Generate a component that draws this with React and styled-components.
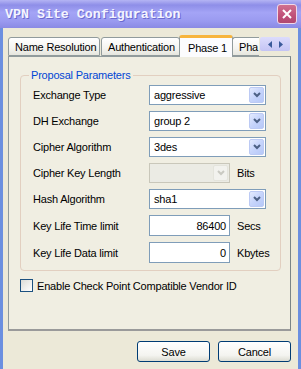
import React from "react";
import styled, { createGlobalStyle } from "styled-components";

const GlobalStyle = createGlobalStyle`
  html, body {
    margin: 0;
    padding: 0;
    background: #ece9d8;
  }
  body {
    font-family: "Liberation Sans", Arial, sans-serif;
    font-size: 11px;
    letter-spacing: -0.2px;
    color: #000;
  }
`;

const Window = styled.div`
  width: 301px;
  height: 369px;
  display: flex;
  flex-direction: column;
  overflow: hidden;
`;

const TitleBar = styled.div`
  height: 28px;
  flex: none;
  display: flex;
  align-items: center;
  justify-content: space-between;
  padding: 0 4px 0 5px;
  box-sizing: border-box;
  background: linear-gradient(
    180deg,
    #b4b4f4 0%,
    #8e8ee8 18%,
    #a4a4f6 45%,
    #9a9af0 75%,
    #8a8ae4 100%
  );
`;

const Title = styled.span`
  font-family: "Liberation Mono", "Courier New", monospace;
  font-weight: bold;
  font-size: 13.3px;
  letter-spacing: 0;
  color: #f4f4ff;
  text-shadow: 1px 1px 0 #6a6ad0;
`;

const CloseButton = styled.div`
  width: 20px;
  height: 20px;
  box-sizing: border-box;
  border: 1px solid #f0d8e8;
  border-radius: 3px;
  background: linear-gradient(180deg, #d07090 0%, #c05078 60%, #b04870 100%);
  display: flex;
  align-items: center;
  justify-content: center;
`;

const Body = styled.div`
  flex: 1;
  display: flex;
  flex-direction: column;
  background: #ece9d8;
  border-left: 3px solid #6b8fe0;
  border-right: 3px solid #6b8fe0;
  padding: 7px 7px 0 5px;
`;

const TabStrip = styled.div`
  height: 22px;
  display: flex;
  align-items: flex-end;
  position: relative;
  z-index: 1;
  margin-bottom: -1px;
`;

const Tab = styled.div`
  flex: none;
  box-sizing: border-box;
  width: ${(p) => p.$w}px;
  height: ${(p) => (p.$active ? 22 : 19)}px;
  margin: ${(p) => (p.$active ? "0 -1px 0 -2px" : "0 1px 1px 0")};
  padding-left: ${(p) => (p.$active ? 8 : 6)}px;
  display: flex;
  align-items: center;
  white-space: nowrap;
  border: 1px solid #919b9c;
  border-bottom: ${(p) => (p.$active ? "none" : "1px solid #919b9c")};
  border-right: ${(p) => (p.$cut ? "none" : "1px solid #919b9c")};
  border-radius: ${(p) => (p.$cut ? "3px 0 0 0" : "3px 3px 0 0")};
  border-top: ${(p) => (p.$active ? "3px solid #f7b43c" : "1px solid #919b9c")};
  background: ${(p) =>
    p.$active
      ? "#fcfcfe"
      : "linear-gradient(180deg, #ffffff 0%, #f4f4f0 60%, #e6e6de 100%)"};
  position: relative;
  z-index: ${(p) => (p.$active ? 2 : 1)};
`;

const ScrollArrows = styled.div`
  align-self: flex-start;
  margin-top: 2px;
  width: 30px;
  height: 14px;
  display: flex;
  align-items: center;
  justify-content: center;
  gap: 5px;
  background: linear-gradient(180deg, #dcdcfc 0%, #c4c4f4 100%);
  border-radius: 2px;
`;

const TabPanel = styled.div`
  height: 275px;
  box-sizing: border-box;
  border: 1px solid #919b9c;
  border-right-color: #7a8487;
  border-bottom: 2px solid #9a9a9a;
  background: #f0eee2;
  padding: 11px 10px 0 11px;
`;

const GroupBox = styled.fieldset`
  margin: 0;
  width: 261px;
  height: 203px;
  box-sizing: border-box;
  border: 1px solid #e2cfc0;
  border-radius: 4px;
  padding: 0 0 0 12px;
`;

const Legend = styled.legend`
  color: #0046d5;
  padding: 0 2px;
  margin-left: -4px;
  line-height: 14px;
`;

const Row = styled.div`
  display: flex;
  align-items: center;
  height: ${(p) => p.$h || 26}px;
`;

const Label = styled.span`
  width: 116px;
  flex: none;
`;

const Select = styled.div`
  width: ${(p) => p.$w || 117}px;
  height: 20px;
  box-sizing: border-box;
  border: 1px solid ${(p) => (p.$disabled ? "#c9c7ba" : "#7f9db9")};
  background: ${(p) => (p.$disabled ? "#ebebe4" : "#fff")};
  display: flex;
  align-items: center;
  justify-content: space-between;
  padding: 0 1px 0 4px;
`;

const DropButton = styled.div`
  width: 15px;
  height: 16px;
  border-radius: 2px;
  display: flex;
  align-items: center;
  justify-content: center;
  background: ${(p) =>
    p.$disabled
      ? "#f2f2ee"
      : "linear-gradient(135deg, #e4ebfe 0%, #c6d4fb 50%, #b6c8f8 100%)"};
  border: 1px solid ${(p) => (p.$disabled ? "#e4e4dc" : "#bccaf4")};
  box-sizing: border-box;
`;

const TextInput = styled.div`
  width: 81px;
  height: 21px;
  box-sizing: border-box;
  border: 1px solid #7f9db9;
  background: #fff;
  display: flex;
  align-items: center;
  justify-content: flex-end;
  padding-right: 3px;
`;

const Unit = styled.span`
  margin-left: 7px;
`;

const CheckRow = styled.div`
  display: flex;
  align-items: center;
  margin-top: 8px;
`;

const CheckBox = styled.div`
  width: 13px;
  height: 13px;
  box-sizing: border-box;
  border: 1px solid #1c5180;
  background: linear-gradient(135deg, #dcdcd7 0%, #fff 100%);
  margin-right: 4px;
`;

const ButtonRow = styled.div`
  display: flex;
  justify-content: flex-end;
  gap: 8px;
  padding-top: 10px;
`;

const Button = styled.div`
  width: 73px;
  height: 21px;
  box-sizing: border-box;
  border: 1px solid #003c74;
  border-radius: 3px;
  background: linear-gradient(180deg, #ffffff 0%, #f4f4f0 70%, #dcdcd2 100%);
  display: flex;
  align-items: center;
  justify-content: center;
`;

const Chevron = ({ disabled }) => (
  <svg width="8" height="6" viewBox="0 0 8 6">
    <path
      d="M1 1 L4 4 L7 1"
      fill="none"
      stroke={disabled ? "#c9c9c2" : "#4d6185"}
      strokeWidth="2"
    />
  </svg>
);

const Combo = ({ value, w, disabled }) => (
  <Select $w={w} $disabled={disabled}>
    <span>{value}</span>
    <DropButton $disabled={disabled}>
      <Chevron disabled={disabled} />
    </DropButton>
  </Select>
);

export default function App() {
  return (
    <Window>
      <GlobalStyle />
      <TitleBar>
        <Title>VPN Site Configuration</Title>
        <CloseButton>
          <svg width="10" height="10" viewBox="0 0 10 10">
            <path d="M1 1 L9 9 M9 1 L1 9" stroke="#fff" strokeWidth="2" />
          </svg>
        </CloseButton>
      </TitleBar>
      <Body>
        <TabStrip>
          <Tab $w={92}>Name Resolution</Tab>
          <Tab $w={79}>Authentication</Tab>
          <Tab $w={54} $active>
            Phase 1
          </Tab>
          <Tab $w={27} $cut>
            Pha
          </Tab>
          <ScrollArrows>
            <svg width="5" height="7" viewBox="0 0 5 7">
              <path d="M4 0 L0 3.5 L4 7 Z" fill="#3a5a9a" />
            </svg>
            <svg width="5" height="7" viewBox="0 0 5 7">
              <path d="M1 0 L5 3.5 L1 7 Z" fill="#3a5a9a" />
            </svg>
          </ScrollArrows>
        </TabStrip>
        <TabPanel>
          <GroupBox>
            <Legend>Proposal Parameters</Legend>
            <Row>
              <Label>Exchange Type</Label>
              <Combo value="aggressive" />
            </Row>
            <Row>
              <Label>DH Exchange</Label>
              <Combo value="group 2" />
            </Row>
            <Row>
              <Label>Cipher Algorithm</Label>
              <Combo value="3des" />
            </Row>
            <Row>
              <Label>Cipher Key Length</Label>
              <Combo value="" w={81} disabled />
              <Unit>Bits</Unit>
            </Row>
            <Row>
              <Label>Hash Algorithm</Label>
              <Combo value="sha1" />
            </Row>
            <Row $h={27}>
              <Label>Key Life Time limit</Label>
              <TextInput>86400</TextInput>
              <Unit>Secs</Unit>
            </Row>
            <Row $h={27}>
              <Label>Key Life Data limit</Label>
              <TextInput>0</TextInput>
              <Unit>Kbytes</Unit>
            </Row>
          </GroupBox>
          <CheckRow>
            <CheckBox />
            Enable Check Point Compatible Vendor ID
          </CheckRow>
        </TabPanel>
        <ButtonRow>
          <Button>Save</Button>
          <Button>Cancel</Button>
        </ButtonRow>
      </Body>
    </Window>
  );
}
